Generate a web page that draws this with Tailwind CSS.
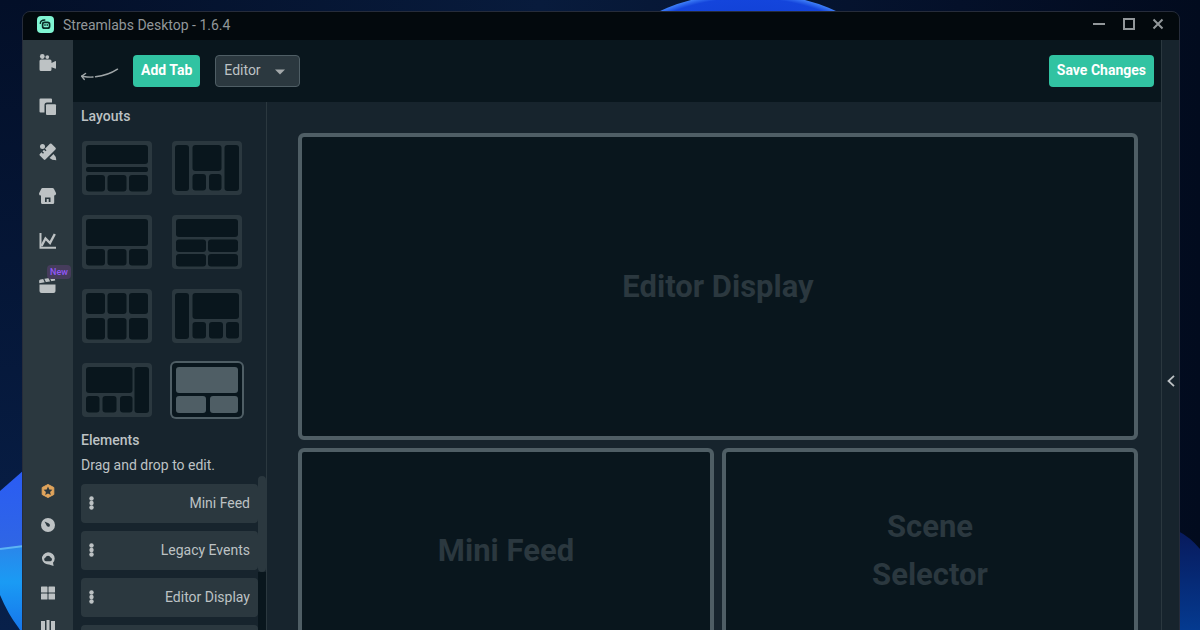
<!DOCTYPE html>
<html lang="en">
<head>
    <meta charset="UTF-8">
    <meta name="viewport" content="width=device-width, initial-scale=1.0">
    <title>Streamlabs Desktop</title>
    <script src="https://cdn.jsdelivr.net/npm/@tailwindcss/browser@4"></script>
</head>
<body class="relative h-screen overflow-hidden bg-[#030d24] font-['Roboto',sans-serif] text-sm text-[#bdc2c4]">
    <!-- Wallpaper -->
    <svg class="absolute inset-0 h-full w-full" viewBox="0 0 1200 630" preserveAspectRatio="none" aria-hidden="true">
        <defs>
            <linearGradient id="sky" x1="0" x2="1" y1="0" y2="0">
                <stop offset="0" stop-color="#030f28"/>
                <stop offset=".45" stop-color="#081b3c"/>
                <stop offset=".8" stop-color="#041029"/>
                <stop offset="1" stop-color="#020b1e"/>
            </linearGradient>
            <linearGradient id="edge" x1="0" x2="0" y1="0" y2="1">
                <stop offset="0" stop-color="#030f28"/>
                <stop offset="1" stop-color="#08204a"/>
            </linearGradient>
            <radialGradient id="petal" cx=".5" cy=".5" r=".5">
                <stop offset="0" stop-color="#0b37c4"/>
                <stop offset=".94" stop-color="#1445dc"/>
                <stop offset="1" stop-color="#3f80f8"/>
            </radialGradient>
            <linearGradient id="petalRight" x1="0" x2="0" y1="0" y2="1">
                <stop offset="0" stop-color="#081a5c"/>
                <stop offset="1" stop-color="#043a90"/>
            </linearGradient>
            <linearGradient id="petalLeft" x1="0" x2="0" y1="0" y2="1">
                <stop offset="0" stop-color="#2a5cf4"/>
                <stop offset="1" stop-color="#2f66e4"/>
            </linearGradient>
            <linearGradient id="petalLow" x1="0" x2="0" y1="0" y2="1">
                <stop offset="0" stop-color="#2a86ea"/>
                <stop offset=".4" stop-color="#1a9bf4"/>
                <stop offset="1" stop-color="#1672ea"/>
            </linearGradient>
        </defs>
        <rect width="1200" height="630" fill="url(#sky)"/>
        <rect width="30" height="630" fill="url(#edge)"/>
        <ellipse cx="748" cy="80" rx="145" ry="87" fill="url(#petal)"/>
        <path d="M0 491 24 470V548L0 549Z" fill="url(#petalLeft)"/>
        <path d="M0 549 24 546V636L18 627Q8 614 0 595Z" fill="url(#petalLow)"/>
        <path d="M0 549 24 546" stroke="#5cb4f4" stroke-width="2"/>
        <path d="M1178 531Q1190 537 1200 549V630H1178Z" fill="url(#petalRight)"/>
    </svg>

    <!-- App window -->
    <div class="relative mt-[11px] mr-5 ml-[22px] flex h-[calc(100vh+81px)] flex-col overflow-hidden rounded-t-lg border border-[#262c3a] bg-[#17242d]">
        <header class="flex h-7 shrink-0 items-center bg-[#03090d] px-[14px] pb-[3px]">
            <svg class="size-[17px]" viewBox="0 0 17 17" aria-hidden="true">
                <rect width="17" height="17" rx="4" fill="#80f5d2"/>
                <rect x="5.6" y="6.4" width="7" height="5.8" rx="2" fill="none" stroke="#0a2a25" stroke-width="1.7"/>
                <path d="M3.3 7.4Q3.3 4.2 7.8 4" fill="none" stroke="#0a2a25" stroke-width="1.4" stroke-linecap="round"/>
                <path d="M8 8v2M10.2 8v2" stroke="#0a2a25" stroke-width="1.1"/>
            </svg>
            <h1 class="ml-[9px] flex-1 text-[#92979a]">Streamlabs Desktop - 1.6.4</h1>
            <div class="flex gap-4 pb-[2px] text-[#92979a]">
                <button class="block" aria-label="Minimize">
                    <svg class="size-[14px]" viewBox="0 0 14 14"><path d="M2 7h12" stroke="currentColor" stroke-width="2"/></svg>
                </button>
                <button class="block" aria-label="Maximize">
                    <svg class="size-[14px]" viewBox="0 0 14 14"><rect x="3" y="2" width="10" height="10" fill="none" stroke="currentColor" stroke-width="2"/></svg>
                </button>
                <button class="block" aria-label="Close">
                    <svg class="size-[14px]" viewBox="0 0 14 14"><path d="m2.5 2.5 9 9M11.5 2.5l-9 9" stroke="currentColor" stroke-width="2"/></svg>
                </button>
            </div>
        </header>

        <div class="flex min-h-0 flex-1">
            <!-- Sidebar -->
            <nav class="flex w-[50px] shrink-0 flex-col items-center justify-between bg-[#2b383f] pt-[14px] pb-[87px]">
                <div class="flex h-[240px] flex-col justify-between">
                    <button aria-label="Editor">
                        <svg class="size-[18px]" viewBox="0 0 18 18" fill="currentColor">
                            <circle cx="3.3" cy="2.5" r="2.4"/><circle cx="8.3" cy="3.1" r="1.9"/>
                            <path d="M2 5.5h9q1.500 0 1.500 1.500v2L16 7.200q1-.4 1 .5V14q0 1-1 .5l-3.500-1.300V15.500q0 1.500-1.500 1.500H2Q.5 17 .5 15.500V7Q.5 5.500 2 5.500Z"/>
                        </svg>
                    </button>
                    <button aria-label="Layout editor">
                        <svg class="size-[18px]" viewBox="0 0 18 18" fill="currentColor">
                            <path d="M1.500.5H12q1 0 1 1v3H8Q5.500 4.500 5.500 7v7.500h-4q-1 0-1-1v-12q0-1 1-1Z"/>
                            <rect x="7" y="6.300" width="10" height="10.700" rx="1"/>
                        </svg>
                    </button>
                    <button aria-label="Themes">
                        <svg class="size-[18px]" viewBox="0 0 18 18" fill="currentColor">
                            <circle cx="3.500" cy="3.500" r="2.500"/>
                            <path d="m12.500.8 4 4q.8.800 0 1.600L6.400 16.500q-.8.800-1.600 0l-4-4q-.8-.8 0-1.600l1.700-1.700 1.500 1.500 1-1-1.500-1.500L5 6.700l1.500 1.500 1-1L6 5.700 10.900.8q.8-.8 1.600 0Z"/>
                            <path d="m10.500 15 4-4q2.700 2.300 2.800 6.200-4.500 0-6.800-2.200Z"/>
                        </svg>
                    </button>
                    <button aria-label="App store">
                        <svg class="size-[18px]" viewBox="0 0 18 18" fill="currentColor">
                            <path d="M3.500 1h10q1 0 1.500 1l2 4q.5 2.500-2 2.500h-13Q-.5 8.500.2 6l2-4q.4-1 1.300-1Z"/>
                            <path d="M2 8h13.200v7.500q0 1.500-1.500 1.500h-10.200Q2 17 2 15.500ZM6 10.500V15h5.500v-4.500Z" fill-rule="evenodd"/>
                            <path d="M7.700 12h2v3h-2z"/>
                        </svg>
                    </button>
                    <button aria-label="Dashboard">
                        <svg class="size-[18px]" viewBox="0 0 18 18" fill="none" stroke="currentColor">
                            <path d="M1.500 1v14.800H17" stroke-width="2"/>
                            <path d="m2.500 14 4-7.500 4.500 4.500 4.800-9" stroke-width="2.400"/>
                        </svg>
                    </button>
                    <button class="relative" aria-label="Highlighter">
                        <svg class="size-[18px]" viewBox="0 0 18 18" fill="currentColor">
                            <path d="M.5 8.500h16V15q0 2-2 2h-12q-2 0-2-2Z"/>
                            <path d="m.3 7.200-.2-2Q0 3.800 1.500 3.500L14.300 1.200q1.300-.2 1.500 1L16.200 4.500Z"/>
                            <path d="m4.500 2.200 2 4.500M10 1.400l2 4.500" stroke="#2b383f" stroke-width="1.200"/>
                        </svg>
                        <span class="absolute -top-[11px] left-2 rounded bg-[#463c5c] px-[3px] text-[9px] leading-[14px] font-medium text-[#9257f8]">New</span>
                    </button>
                </div>
                <div class="flex flex-col gap-5">
                    <button class="text-[#e0a45c]" aria-label="Prime">
                        <svg class="size-[14px]" viewBox="0 0 14 14">
                            <path d="M7 .5 12.800 3.500v7L7 13.500 1.200 10.500v-7Z" fill="currentColor" stroke="currentColor" stroke-linejoin="round"/>
                            <path d="m7 2.600 1.300 2.900 3.100.3-2.300 2.100.7 3.100L7 9.400 4.200 11l.7-3.100-2.300-2.100 3.100-.3Z" fill="#2b383f"/>
                        </svg>
                    </button>
                    <button aria-label="Cloudbot">
                        <svg class="size-[14px]" viewBox="0 0 14 14">
                            <circle cx="7" cy="7" r="7" fill="currentColor"/>
                            <path d="m3.500 3.500 4 1.700q2 1 1.300 2.700-1 1.500-2.800.4Z" fill="#2b383f"/>
                        </svg>
                    </button>
                    <button aria-label="Help">
                        <svg class="size-[14px]" viewBox="0 0 14 14">
                            <path d="M7 .3a6.700 6.200 0 0 1 6.700 6.200q0 2.500-1.700 4.200l.6 3.300L8 12.500A6.500 6.100 0 1 1 7 .3Z" fill="currentColor"/>
                            <path d="M4.800 9.300a1.900 1.900 0 0 1-.3-3.700 2.700 2.700 0 0 1 5.100 0 1.900 1.900 0 0 1-.2 3.700Z" fill="#2b383f"/>
                        </svg>
                    </button>
                    <button aria-label="Layouts">
                        <svg class="size-[14px]" viewBox="0 0 14 14" fill="currentColor">
                            <rect y=".5" width="6.500" height="6" rx=".6"/><rect x="7.500" y=".5" width="6.500" height="6" rx=".6"/>
                            <rect y="7.500" width="6.500" height="6" rx=".6"/><rect x="7.500" y="7.500" width="6.500" height="6" rx=".6"/>
                        </svg>
                    </button>
                    <button aria-label="Library">
                        <svg class="size-[14px]" viewBox="0 0 14 14" fill="currentColor">
                            <rect y="1" width="4" height="13"/><rect x="5.500" width="3" height="14"/><rect x="10" y="1" width="4" height="13"/>
                        </svg>
                    </button>
                </div>
            </nav>

            <main class="flex min-w-0 flex-1 flex-col">
                <!-- Toolbar -->
                <div class="flex h-[62px] shrink-0 items-center bg-[#09161d] pr-[7px] pl-2">
                    <svg class="mt-2 h-[14px] w-[38px]" viewBox="0 0 38 14" fill="none" stroke="#a0a6a8" stroke-linecap="round" aria-hidden="true">
                        <path d="M.8 8.200Q9 9.500 12 9M14.500 8.800Q27 7.500 36.500 1.200" stroke-width="1.400"/>
                        <path d="M4.500 5.500.8 8.200l2.400 3.200" stroke-width="1.500"/>
                    </svg>
                    <button class="ml-[14px] h-8 rounded bg-[#31c3a2] px-2 pb-[2px] font-bold text-white">Add Tab</button>
                    <div class="relative ml-[15px]">
                        <select class="h-8 w-[85px] appearance-none rounded border border-[#4f5e65] bg-[#2b383f] pb-[2px] pl-2 outline-none" aria-label="Tab">
                            <option>Editor</option>
                        </select>
                        <svg class="pointer-events-none absolute top-[14px] right-[15px] h-[6px] w-[10px]" viewBox="0 0 10 6" fill="#a4a9ab"><path d="M0 .5h10L5 5.500Z"/></svg>
                    </div>
                    <button class="ml-auto h-8 rounded bg-[#31c3a2] px-2 pb-[2px] font-bold text-white">Save Changes</button>
                </div>

                <div class="flex min-h-0 flex-1">
                    <!-- Layouts and elements -->
                    <aside class="flex w-[194px] shrink-0 flex-col border-r border-[#2b383f] pt-1 pl-2">
                        <h2 class="leading-5 font-medium">Layouts</h2>
                        <div class="mt-[15px] ml-px grid grid-cols-[70px_70px] gap-x-5 gap-y-5">
                            <button class="h-[54px] rounded bg-[#2b383f]" aria-label="Default">
                                <svg class="h-[54px] w-[70px] fill-[#09161d]" viewBox="0 0 70 54">
                                    <rect x="4" y="4" width="62" height="19" rx="3"/>
                                    <rect x="4" y="26" width="62" height="5" rx="2"/>
                                    <rect x="4" y="34" width="19" height="16.500" rx="3"/><rect x="25.500" y="34" width="19" height="16.500" rx="3"/><rect x="47" y="34" width="19" height="16.500" rx="3"/>
                                </svg>
                            </button>
                            <button class="h-[54px] rounded bg-[#2b383f]" aria-label="Two pane">
                                <svg class="h-[54px] w-[70px] fill-[#09161d]" viewBox="0 0 70 54">
                                    <rect x="3" y="4" width="14" height="46" rx="3"/><rect x="52.500" y="4" width="14.500" height="46" rx="3"/>
                                    <rect x="20.500" y="4" width="29" height="26" rx="3"/>
                                    <rect x="20.500" y="33" width="13.500" height="16.500" rx="3"/><rect x="37" y="33" width="12.500" height="16.500" rx="3"/>
                                </svg>
                            </button>
                            <button class="h-[54px] rounded bg-[#2b383f]" aria-label="Classic">
                                <svg class="h-[54px] w-[70px] fill-[#09161d]" viewBox="0 0 70 54">
                                    <rect x="4" y="4" width="62" height="27" rx="3"/>
                                    <rect x="4" y="34" width="19" height="16.500" rx="3"/><rect x="25.500" y="34" width="19" height="16.500" rx="3"/><rect x="47" y="34" width="19" height="16.500" rx="3"/>
                                </svg>
                            </button>
                            <button class="h-[54px] rounded bg-[#2b383f]" aria-label="Four by four">
                                <svg class="h-[54px] w-[70px] fill-[#09161d]" viewBox="0 0 70 54">
                                    <rect x="4" y="4" width="62" height="18" rx="3"/>
                                    <rect x="4" y="24.500" width="30" height="12.500" rx="3"/><rect x="36" y="24.500" width="30" height="12.500" rx="3"/>
                                    <rect x="4" y="39" width="30" height="12.500" rx="3"/><rect x="36" y="39" width="30" height="12.500" rx="3"/>
                                </svg>
                            </button>
                            <button class="h-[54px] rounded bg-[#2b383f]" aria-label="Six cells">
                                <svg class="h-[54px] w-[70px] fill-[#09161d]" viewBox="0 0 70 54">
                                    <rect x="4" y="4" width="19" height="21" rx="3"/><rect x="25.500" y="4" width="19" height="21" rx="3"/><rect x="47" y="4" width="19" height="21" rx="3"/>
                                    <rect x="4" y="29" width="19" height="21.500" rx="3"/><rect x="25.500" y="29" width="19" height="21.500" rx="3"/><rect x="47" y="29" width="19" height="21.500" rx="3"/>
                                </svg>
                            </button>
                            <button class="h-[54px] rounded bg-[#2b383f]" aria-label="Left pane">
                                <svg class="h-[54px] w-[70px] fill-[#09161d]" viewBox="0 0 70 54">
                                    <rect x="3" y="4" width="14" height="46" rx="3"/>
                                    <rect x="20.500" y="4" width="46.500" height="26" rx="3"/>
                                    <rect x="20.500" y="33" width="13.500" height="16.500" rx="3"/><rect x="37" y="33" width="14" height="16.500" rx="3"/><rect x="54" y="33" width="13" height="16.500" rx="3"/>
                                </svg>
                            </button>
                            <button class="h-[54px] rounded bg-[#2b383f]" aria-label="Right pane">
                                <svg class="h-[54px] w-[70px] fill-[#09161d]" viewBox="0 0 70 54">
                                    <rect x="4" y="4" width="46.500" height="26" rx="3"/>
                                    <rect x="4" y="33" width="13.500" height="16.500" rx="3"/><rect x="20.500" y="33" width="14" height="16.500" rx="3"/><rect x="38" y="33" width="12.500" height="16.500" rx="3"/>
                                    <rect x="52.500" y="4" width="14.500" height="46" rx="3"/>
                                </svg>
                            </button>
                            <button class="h-[54px] rounded bg-[#09161d] ring-2 ring-[#4f5e65]" aria-label="One pane" aria-pressed="true">
                                <svg class="h-[54px] w-[70px] fill-[#4f5e65]" viewBox="0 0 70 54">
                                    <rect x="4" y="4" width="62" height="26" rx="3"/>
                                    <rect x="4" y="33" width="30" height="17" rx="3"/><rect x="38" y="33" width="28" height="17" rx="3"/>
                                </svg>
                            </button>
                        </div>

                        <h2 class="mt-[13px] leading-5 font-medium">Elements</h2>
                        <p class="mt-[5px] leading-5">Drag and drop to edit.</p>
                        <div class="mt-px flex min-h-0 flex-1 overflow-hidden">
                            <ul class="flex flex-1 flex-col gap-2 pt-2">
                                <li class="flex h-[39px] shrink-0 items-center justify-between rounded bg-[#2b383f] px-2 pb-[2px]" draggable="true">
                                    <svg class="h-[14px] w-[5px]" viewBox="0 0 5 14" fill="currentColor"><circle cx="2.500" cy="2.500" r="2.200"/><circle cx="2.500" cy="7" r="2.200"/><circle cx="2.500" cy="11.500" r="2.200"/></svg>
                                    Mini Feed
                                </li>
                                <li class="flex h-[39px] shrink-0 items-center justify-between rounded bg-[#2b383f] px-2 pb-[2px]" draggable="true">
                                    <svg class="h-[14px] w-[5px]" viewBox="0 0 5 14" fill="currentColor"><circle cx="2.500" cy="2.500" r="2.200"/><circle cx="2.500" cy="7" r="2.200"/><circle cx="2.500" cy="11.500" r="2.200"/></svg>
                                    Legacy Events
                                </li>
                                <li class="flex h-[39px] shrink-0 items-center justify-between rounded bg-[#2b383f] px-2 pb-[2px]" draggable="true">
                                    <svg class="h-[14px] w-[5px]" viewBox="0 0 5 14" fill="currentColor"><circle cx="2.500" cy="2.500" r="2.200"/><circle cx="2.500" cy="7" r="2.200"/><circle cx="2.500" cy="11.500" r="2.200"/></svg>
                                    Editor Display
                                </li>
                                <li class="h-[39px] shrink-0 rounded bg-[#2b383f]" draggable="true"></li>
                            </ul>
                            <!-- Scrollbar -->
                            <div class="w-2 bg-[#09161d]">
                                <div class="bg-[#17242d]"><div class="h-24 rounded-full bg-[#2b383f]"></div></div>
                            </div>
                        </div>
                    </aside>

                    <!-- Drop zones -->
                    <section class="grid min-w-0 flex-1 grid-cols-2 grid-rows-[3fr_2fr] gap-2 pt-[31px] pr-[23px] pb-[68px] pl-[31px] text-center text-[31px] leading-[48px] font-bold text-[#2b383f]">
                        <div class="col-span-2 flex items-center justify-center rounded-md border-4 border-[#4f5e65] bg-[#09161d]">Editor Display</div>
                        <div class="flex items-center justify-center rounded-md border-4 border-[#4f5e65] bg-[#09161d]">Mini Feed</div>
                        <div class="flex items-center justify-center rounded-md border-4 border-[#4f5e65] bg-[#09161d]">Scene<br>Selector</div>
                    </section>
                </div>
            </main>

            <!-- Collapsed live dock -->
            <aside class="flex w-[18px] shrink-0 items-center justify-center border-l border-[#2b383f]">
                <button aria-label="Open live dock">
                    <svg class="h-3 w-2" viewBox="0 0 8 12" fill="none" stroke="currentColor" stroke-width="1.800"><path d="M7 .8 1.500 6 7 11.200"/></svg>
                </button>
            </aside>
        </div>
    </div>
</body>
</html>
